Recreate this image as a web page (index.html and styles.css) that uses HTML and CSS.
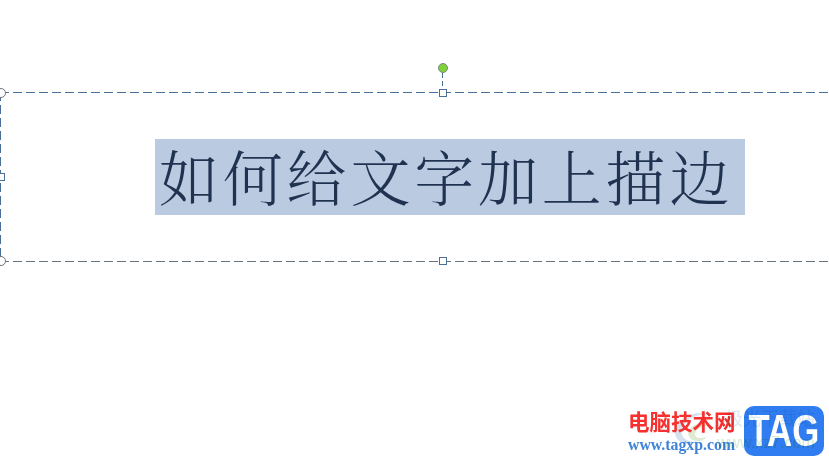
FILE: index.html
```html
<!DOCTYPE html>
<html lang="zh-CN">
<head>
<meta charset="utf-8">
<title>如何给文字加上描边</title>
<link rel="stylesheet" href="styles.css">
</head>
<body>
<main class="slide">
  <div class="rotate-stem"></div>
  <div class="rotate-handle"></div>
  <section class="textbox">
    <span class="handle round tl"></span>
    <span class="handle square tc"></span>
    <span class="handle square ml"></span>
    <span class="handle round bl"></span>
    <span class="handle square bc"></span>
    <p class="selected-text">如何给文字加上描边</p>
  </section>
  <aside class="watermark">
    <svg class="wm-swirl" viewBox="0 0 60 50" aria-hidden="true">
      <path d="M6 26C10 10 30 2 48 8C34 6 18 12 14 26C12 36 22 42 32 40C20 48 4 40 6 26Z" fill="#d3e2ec"/>
      <path d="M22 28C26 18 40 16 50 22C42 20 32 24 30 30C29 35 36 38 44 34C38 44 20 40 22 28Z" fill="#dcebd2"/>
    </svg>
    <div class="wm-text">
      <span class="wm-title">电脑技术网</span>
      <span class="wm-url">www.tagxp.com</span>
    </div>
    <div class="wm-tag"><span class="wm-tag-label">TAG</span></div>
    <span class="wm-ghost-title">极光下载站</span>
    <span class="wm-ghost-url">www.xz7.com</span>
  </aside>
</main>
</body>
</html>
```
FILE: styles.css
```css
html, body {
  margin: 0;
  padding: 0;
  background: #fff;
}
.slide {
  position: relative;
  width: 829px;
  height: 458px;
  overflow: hidden;
  padding-top: 92px;
  box-sizing: border-box;
  font-family: "Noto Serif CJK SC", "Noto Sans CJK SC", serif;
}
.textbox {
  position: relative;
  height: 170px;
  box-sizing: border-box;
  padding: 47px 0 0 155px;
  background-image:
    repeating-linear-gradient(to right, #4a7097 0 9px, transparent 9px 13px),
    repeating-linear-gradient(to right, #66727e 0 9px, transparent 9px 13px),
    repeating-linear-gradient(to bottom, #4a7097 0 9px, transparent 9px 13px);
  background-size: 100% 1px, 100% 1px, 1px 100%;
  background-position: 0 0, 0 100%, 0 0;
  background-repeat: no-repeat;
}
.selected-text {
  margin: 0;
  width: 590px;
  height: 76px;
  background: #b9cae1;
  color: #1f3350;
  font-size: 60px;
  font-weight: 300;
  line-height: 73px;
  letter-spacing: 3.8px;
  padding-left: 4px;
  box-sizing: border-box;
  white-space: nowrap;
}
.handle {
  position: absolute;
  box-sizing: border-box;
  background: #fff;
  border: 1px solid #4a7097;
}
.handle.square {
  width: 8px;
  height: 8px;
}
.handle.round {
  width: 10px;
  height: 10px;
  border-radius: 50%;
  border-color: #70757b;
}
.tl { left: -4px; top: -4px; }
.bl { left: -4px; bottom: -4px; }
.tc { left: 439px; top: -3px; }
.bc { left: 439px; bottom: -3px; }
.ml { left: -3px; top: 81px; }
.rotate-stem {
  position: absolute;
  left: 442px;
  top: 73px;
  width: 1px;
  height: 16px;
  background: repeating-linear-gradient(to bottom, #4a7097 0 5px, transparent 5px 8px);
}
.rotate-handle {
  position: absolute;
  left: 438px;
  top: 63px;
  width: 10px;
  height: 10px;
  box-sizing: border-box;
  border-radius: 50%;
  background: #7ed23a;
  border: 1px solid #7f8a80;
}
.watermark {
  position: absolute;
  left: 0;
  top: 0;
  width: 829px;
  height: 458px;
  pointer-events: none;
}
.wm-swirl {
  position: absolute;
  left: 670px;
  top: 408px;
  width: 50px;
  height: 42px;
}
.wm-ghost-title {
  position: absolute;
  left: 725px;
  top: 404px;
  font: 18px/26px "Noto Sans CJK SC", sans-serif;
  color: #dde8f1;
  mix-blend-mode: multiply;
  white-space: nowrap;
}
.wm-ghost-url {
  position: absolute;
  left: 717px;
  top: 434px;
  font: 16px/18px "Liberation Sans", sans-serif;
  color: #d6ecd4;
  mix-blend-mode: multiply;
  white-space: nowrap;
}
.wm-text {
  position: absolute;
  left: 628px;
  top: 408px;
  display: flex;
  flex-direction: column;
  gap: 2px;
}
.wm-title {
  font: 700 21.5px/26px "Noto Sans CJK SC", sans-serif;
  color: #f5302f;
  white-space: nowrap;
}
.wm-url {
  font: 700 15.8px/18px "Liberation Serif", serif;
  color: #3f83d8;
  white-space: nowrap;
}
.wm-tag {
  position: absolute;
  left: 744px;
  top: 406px;
  width: 80px;
  height: 50px;
  border-radius: 10px;
  background: #2f7df0;
  color: #fff;
  display: flex;
  justify-content: center;
  font: 700 44px/50px "Liberation Sans", sans-serif;
}
.wm-tag-label {
  display: inline-block;
  transform: scaleX(0.79);
}
```
